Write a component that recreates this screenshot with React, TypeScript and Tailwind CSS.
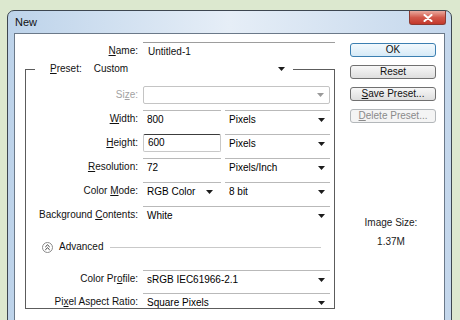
const Arrow = ({ muted = false }: { muted?: boolean }) => (
  <svg width="7" height="4" viewBox="0 0 7 4" className="shrink-0">
    <path d="M0 0 H7 L3.5 4 Z" fill={muted ? "#9a9a9a" : "#1c1c1c"} />
  </svg>
);

const Key = ({ children }: { children: string }) => <span className="underline">{children}</span>;

const Label = ({ children, muted = false }: { children: React.ReactNode; muted?: boolean }) => (
  <div className={`w-[112px] shrink-0 text-right ${muted ? "text-[#a3a3a3]" : "text-[#111]"}`}>{children}</div>
);

const Field = ({ text, arrow = true, className = "" }: { text: string; arrow?: boolean; className?: string }) => (
  <div className={`flex h-[18px] items-center justify-between border-t border-[#b9b9b9] pl-[4px] pr-[5px] ${className}`}>
    <span>{text}</span>
    {arrow && <Arrow />}
  </div>
);

const Row = ({ label, children, className = "h-[24px]" }: { label: React.ReactNode; children: React.ReactNode; className?: string }) => (
  <div className={`flex items-center ${className}`}>
    <Label>{label}</Label>
    <div className="ml-[5px] flex flex-1 items-center gap-[4px]">{children}</div>
  </div>
);

const Button = ({ children, kind = "normal" }: { children: React.ReactNode; kind?: "default" | "normal" | "disabled" }) => {
  const styles = {
    default: "border-[#3c7fb1] bg-gradient-to-b from-[#f3f9fd] to-[#d6eaf7] text-[#111]",
    normal: "border-[#707070] bg-gradient-to-b from-[#f7f7f7] to-[#dedede] text-[#111]",
    disabled: "border-[#b3b7ba] bg-[#f4f4f4] text-[#8a8a8a]",
  }[kind];
  return (
    <div className={`flex h-[14px] w-[86px] items-center justify-center rounded-[3px] border ${styles}`}>{children}</div>
  );
};

export default function App() {
  return (
    <div className="h-[320px] w-[460px] overflow-hidden bg-[#dce8cf] pl-[7px] pr-[8px] pt-[10px] font-['Liberation_Sans',Arial,sans-serif] text-[10px] leading-none">
      <div className="flex h-[330px] flex-col rounded-t-[7px] border border-[#3d4650] bg-gradient-to-r from-[#bdd3ea] via-[#e6eef7] to-[#c4d7ec] px-[6px]">
        {/* Title bar */}
        <div className="flex h-[22px] shrink-0 justify-between">
          <span className="self-center pl-[1px] text-[11px] text-[#111]">New</span>
          <div className="-mr-[1px] flex h-[14px] w-[37px] items-center justify-center rounded-b-[3px] border border-t-0 border-[#8c3a32] bg-gradient-to-b from-[#e9a99f] via-[#d2584b] to-[#c3372a]">
            <svg width="10" height="8" viewBox="0 0 10 8">
              <path d="M1.5 1 L8.5 7 M8.5 1 L1.5 7" stroke="#fff" strokeWidth="2" strokeLinecap="round" />
            </svg>
          </div>
        </div>

        {/* Client area */}
        <div className="flex flex-1 border border-[#6b7989] bg-white pl-[10px]">
          <div className="w-[310px] shrink-0">
            <div className="mt-[8px] flex h-[18px] items-center">
              <div className="w-[113px] shrink-0 text-right text-[#111]">
                <Key>N</Key>ame:
              </div>
              <div className="ml-[5px] flex h-[18px] flex-1 items-center border-t border-[#9d9d9d] pl-[5px] text-[#111]">Untitled-1</div>
            </div>

            <fieldset className="border border-[#5c5c5c] pr-[4px] pt-[5px]">
              <legend className="ml-[9px] flex h-[18px] w-[258px] items-center">
                <span className="pl-[15px] text-[#111]">
                  <Key>P</Key>reset:
                </span>
                <div className="ml-[8px] flex flex-1 items-center justify-between pl-[4px] pr-[8px] text-[#111]">
                  <span>Custom</span>
                  <Arrow />
                </div>
              </legend>

              <Row label={<Label muted>Si<Key>z</Key>e:</Label>}>
                <div className="flex h-[18px] flex-1 items-center justify-end rounded-[2px] border border-[#c4c4c4] pr-[5px]">
                  <Arrow muted />
                </div>
              </Row>
              <Row label={<><Key>W</Key>idth:</>}>
                <Field text="800" arrow={false} className="w-[78px]" />
                <Field text="Pixels" className="flex-1" />
              </Row>
              <Row label={<><Key>H</Key>eight:</>}>
                <div className="flex h-[18px] w-[78px] items-center rounded-[2px] border border-[#c8c8c8] border-t-[#3c3c3c] pl-[4px]">600</div>
                <Field text="Pixels" className="flex-1" />
              </Row>
              <Row label={<><Key>R</Key>esolution:</>}>
                <Field text="72" arrow={false} className="w-[78px]" />
                <Field text="Pixels/Inch" className="flex-1" />
              </Row>
              <Row label={<>Color <Key>M</Key>ode:</>}>
                <Field text="RGB Color" className="w-[78px] pr-[8px]" />
                <Field text="8 bit" className="flex-1" />
              </Row>
              <Row label={<>Background <Key>C</Key>ontents:</>}>
                <Field text="White" className="flex-1" />
              </Row>

              <div className="mr-[9px] mt-[8px] flex h-[24px] items-center pl-[16px]">
                <svg width="11" height="11" viewBox="0 0 11 11" className="shrink-0">
                  <circle cx="5.5" cy="5.5" r="5" fill="#fff" stroke="#8a8a8a" />
                  <path d="M3.3 5 L5.5 2.9 L7.7 5 M3.3 7.9 L5.5 5.8 L7.7 7.9" fill="none" stroke="#333" strokeWidth="1" />
                </svg>
                <span className="ml-[6px] text-[#111]">Advanced</span>
                <div className="ml-[7px] h-px flex-1 bg-[#c9c9c9]" />
              </div>

              <Row label={<>Color Pr<Key>o</Key>file:</>} className="mt-[8px] h-[24px]">
                <Field text="sRGB IEC61966-2.1" className="flex-1" />
              </Row>
              <Row label={<>Pi<Key>x</Key>el Aspect Ratio:</>} className="mt-[5px] h-[12px]">
                <Field text="Square Pixels" className="flex-1" />
              </Row>
            </fieldset>
          </div>

          <div className="ml-[15px] flex w-[86px] shrink-0 flex-col pt-[9px]">
            <div className="flex flex-col gap-[8px]">
              <Button kind="default">OK</Button>
              <Button>Reset</Button>
              <Button>
                <span>
                  <Key>S</Key>ave Preset...
                </span>
              </Button>
              <Button kind="disabled">
                <span>
                  <Key>D</Key>elete Preset...
                </span>
              </Button>
            </div>
            <div className="mt-[93px] flex flex-col items-center pr-[4px] text-[#222]">
              <div className="h-[14px] leading-[14px]">Image Size:</div>
              <div className="mt-[5px] h-[14px] leading-[14px]">1.37M</div>
            </div>
          </div>
        </div>
      </div>
    </div>
  );
}
